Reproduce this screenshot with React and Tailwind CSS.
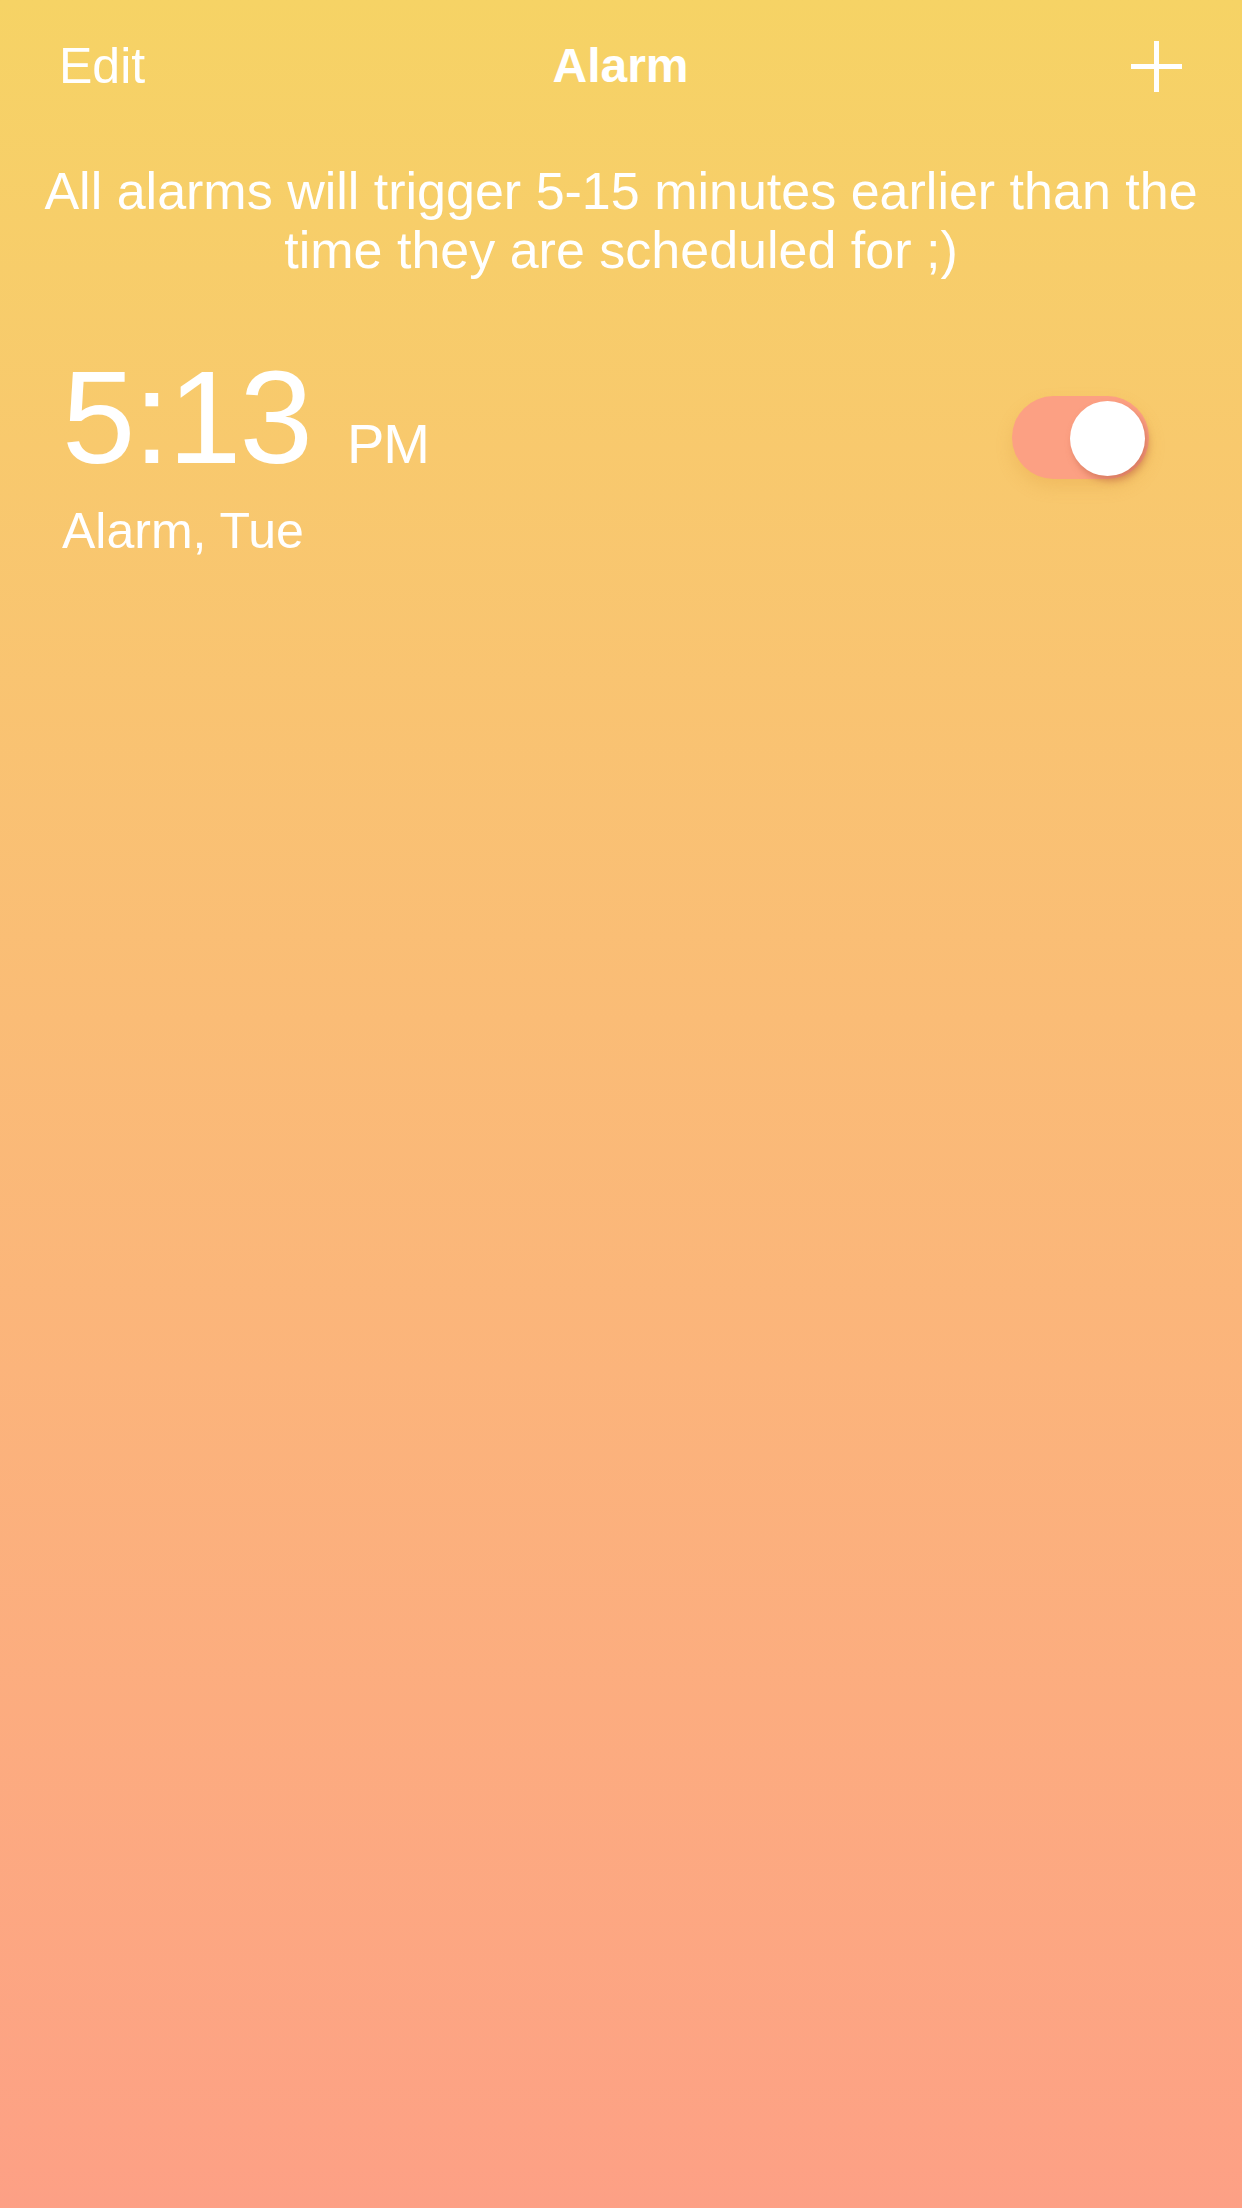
import React, { useState } from 'react';

function PlusIcon() {
  return (
    <svg width="51" height="51" viewBox="0 0 51 51" fill="none">
      <rect x="23" y="0" width="5" height="51" fill="white" />
      <rect x="0" y="23" width="51" height="5" fill="white" />
    </svg>
  );
}

function Toggle({ on, onChange }) {
  return (
    <button
      onClick={() => onChange(!on)}
      className={`relative w-[137px] h-[83px] rounded-full shadow-[0_8px_16px_rgba(220,150,60,0.25)] ${on ? 'bg-[#fca083]' : 'bg-white/30'}`}
    >
      <span
        className={`absolute top-[5px] w-[75px] h-[75px] rounded-full bg-white shadow-[3px_5px_7px_rgba(190,95,70,0.55)] ${on ? 'right-[4px]' : 'left-[4px]'}`}
      />
    </button>
  );
}

export default function App() {
  const [enabled, setEnabled] = useState(true);

  return (
    <div
      className="min-h-screen w-full bg-linear-to-b from-[#f6d365] to-[#fda085] text-white"
      style={{ fontFamily: '"Liberation Sans", Arial, sans-serif' }}
    >
      {/* Nav bar */}
      <div className="grid grid-cols-[1fr_auto_1fr] items-center h-[132px] pl-[59px] pr-[60px]">
        <button className="justify-self-start text-[50px] leading-[50px]">Edit</button>
        <h1 className="text-[48px] leading-[48px] font-bold">Alarm</h1>
        <button className="justify-self-end">
          <PlusIcon />
        </button>
      </div>

      {/* Notice */}
      <p className="mt-[30px] px-[40px] text-center text-[52px] leading-[59px]">
        All alarms will trigger 5-15 minutes earlier than the time they are scheduled for ;)
      </p>

      {/* Alarm row */}
      <div className="flex items-start justify-between mt-[72px] pl-[62px] pr-[93px]">
        <div>
          <div className="flex items-baseline">
            <span className="text-[132px] leading-[132px] tracking-[-2px]">5:13</span>
            <span className="ml-[36px] text-[56px] tracking-[-1px]">PM</span>
          </div>
          <div className="mt-[20px] text-[50px] leading-[50px]">Alarm, Tue</div>
        </div>
        <div className="mt-[44px]">
          <Toggle on={enabled} onChange={setEnabled} />
        </div>
      </div>
    </div>
  );
}
